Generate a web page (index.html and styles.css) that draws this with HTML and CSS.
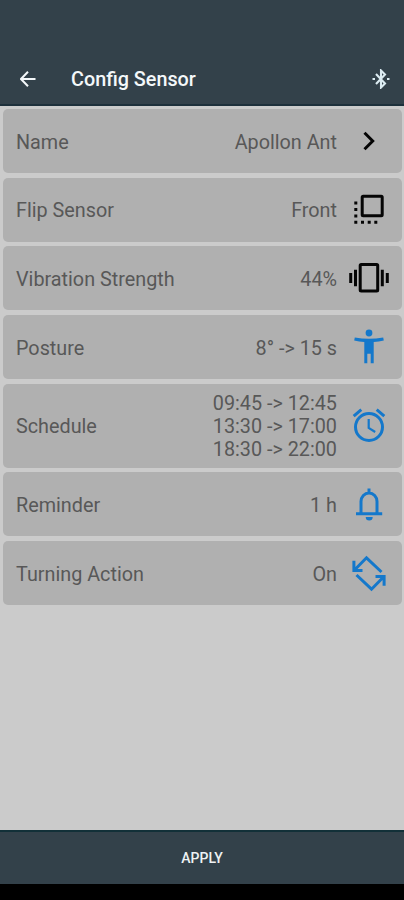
FILE: index.html
```
<!DOCTYPE html>
<html lang="en">
<head>
    <meta charset="utf-8">
    <title>Config Sensor</title>
    <link rel="stylesheet" href="styles.css">
</head>
<body>
    <header class="toolbar">
        <svg class="back" viewBox="0 0 16 16"><path d="M8 .8L1 8l7 7.200M1 8h14.500"/></svg>
        <h1>Config Sensor</h1>
        <svg class="bluetooth" viewBox="0 0 18 20"><path d="M4 5l9 9.500-4 4V1.500l4 4L4 15"/><path d="M.5 10h2.500M15 10h2.500"/></svg>
    </header>

    <main class="settings">
        <div class="card">
            <span class="label">Name</span>
            <span class="value">Apollon Ant</span>
            <svg class="icon" viewBox="0 0 40 40"><path d="M15.500 11.800l8.200 8.200-8.200 8.200"/></svg>
        </div>
        <div class="card">
            <span class="label">Flip Sensor</span>
            <span class="value">Front</span>
            <svg class="icon" viewBox="0 0 40 40">
                <rect x="13.200" y="6.200" width="20" height="19.500" rx="1"/>
                <path d="M6.800 11.500v3M6.800 18v3M6.800 24.500v3M5.300 32.300h3M12 32.300h3M18.700 32.300h3M25.300 32.300h3"/>
            </svg>
        </div>
        <div class="card">
            <span class="label">Vibration Strength</span>
            <span class="value">44%</span>
            <svg class="icon" viewBox="0 0 40 40">
                <rect x="11.200" y="6.500" width="17.500" height="26.500" rx="1"/>
                <path d="M6.500 11.700v16.600M1.700 15v10M33.300 11.700v16.600M38.300 15v10"/>
            </svg>
        </div>
        <div class="card">
            <span class="label">Posture</span>
            <span class="value">8° -&gt; 15 s</span>
            <svg class="icon blue solid" viewBox="0 0 40 40">
                <circle cx="20" cy="6" r="3.400"/>
                <path d="M5.800 10.500Q20 13 34.200 10.500l.6 2.900q-5 1.200-10.100 1.700v21.200h-3v-9.500h-3.400v9.500h-3V15.100q-5.100-.5-10.100-1.700z"/>
            </svg>
        </div>
        <div class="card tall">
            <span class="label">Schedule</span>
            <span class="value">09:45 -&gt; 12:45<br>13:30 -&gt; 17:00<br>18:30 -&gt; 22:00</span>
            <svg class="icon blue" viewBox="0 0 40 40">
                <circle cx="20" cy="21" r="13.500"/>
                <path d="M4.700 10.200l7.600-6.500M27.700 3.700l7.600 6.500"/>
                <path class="thin" d="M19.700 13v9l6.500 4"/>
            </svg>
        </div>
        <div class="card">
            <span class="label">Reminder</span>
            <span class="value">1 h</span>
            <svg class="icon blue" viewBox="0 0 40 40">
                <path d="M7 29.800h26.200M12 29V17.500a8 8.500 0 0 1 16 0V29M20 4.500v4"/>
                <path class="fill" d="M16.700 33h7a3.500 3.500 0 0 1-7 0z"/>
            </svg>
        </div>
        <div class="card">
            <span class="label">Turning Action</span>
            <span class="value">On</span>
            <svg class="icon blue" viewBox="0 0 40 40">
                <path d="M32.500 19L17.500 4.800 5.500 17M4.900 7.800v9.600h8.600"/>
                <path d="M7.500 22L22.500 36.200 34.500 24M26.500 23.600h8.600v9.100"/>
            </svg>
        </div>
    </main>

    <button class="apply">APPLY</button>
    <div class="navbar"></div>
</body>
</html>
```

FILE: styles.css
```
* {
    box-sizing: border-box;
}
body {
    margin: 0;
    height: 900px;
    display: flex;
    flex-direction: column;
    background: #cbcbcb;
    font-family: Roboto, sans-serif;
}
svg {
    fill: none;
    stroke: currentColor;
    flex: none;
}
.toolbar {
    height: 106px;
    padding: 54px 14px 0 20px;
    display: flex;
    align-items: center;
    background: #33414a;
    border-bottom: 2px solid #1d303b;
    color: #f4f8fa;
}
.toolbar h1 {
    margin: 0 auto 0 35px;
    padding-top: 1px;
    font-size: 19.8px;
    font-weight: 500;
    line-height: 24px;
}
.back {
    width: 16px;
    height: 16px;
    stroke-width: 2;
}
.bluetooth {
    width: 18px;
    height: 20px;
    stroke-width: 2.1;
    color: #dcecf2;
}
.settings {
    flex: 1;
    padding: 3px 2px 0 3px;
    display: flex;
    flex-direction: column;
    gap: 4.7px;
}
.card {
    height: 64px;
    padding: 0 13px 0 13px;
    display: flex;
    align-items: center;
    background: #b0b0b0;
    border-radius: 5px;
    color: #585858;
    font-size: 19.8px;
    line-height: 23px;
}
.card.tall {
    height: 84px;
}
.label {
    flex: 1;
    padding-top: 2px;
}
.value {
    margin-right: 12px;
    padding-top: 2px;
    text-align: right;
}
.icon {
    width: 40px;
    height: 40px;
    color: #050505;
    stroke-width: 3;
}
.blue {
    color: #1478cb;
}
.solid {
    fill: currentColor;
    stroke: none;
}
.thin {
    stroke-width: 2.2;
}
.fill {
    fill: currentColor;
    stroke: none;
}
.apply {
    height: 54px;
    padding: 0;
    border: 0;
    border-top: 2px solid #123038;
    background: #33414a;
    color: #eef2f4;
    font: 500 14px Roboto, sans-serif;
}
.navbar {
    height: 16px;
    background: #000;
}
```
